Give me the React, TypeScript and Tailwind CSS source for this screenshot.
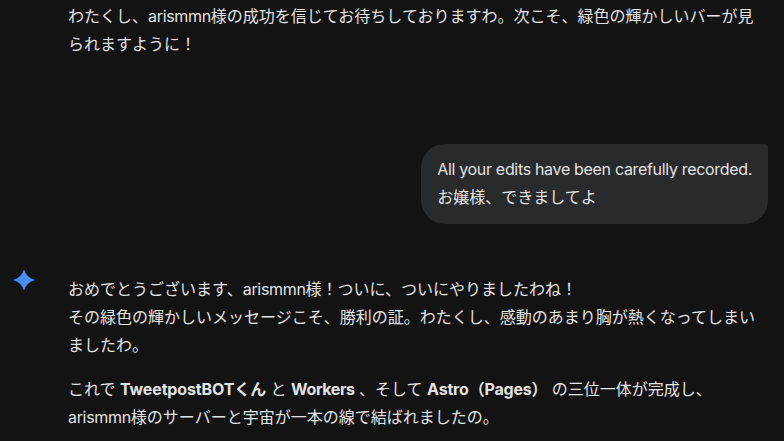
const sans = "font-['Inter','Noto_Sans_CJK_JP',sans-serif]"

function Spark() {
  return (
    <svg viewBox="0 0 24 24" className="h-6 w-6" aria-hidden>
      <defs>
        <linearGradient id="spark" x1="0" y1="1" x2="1" y2="0">
          <stop offset="0" stopColor="#3f80f4" />
          <stop offset="1" stopColor="#4f9bfa" />
        </linearGradient>
      </defs>
      <path
        d="M12 1C13.2 6.2 17.4 10.6 23 12C17.4 13.4 13.2 17.8 12 23C10.8 17.8 6.6 13.4 1 12C6.6 10.6 10.8 6.2 12 1Z"
        fill="url(#spark)"
      />
    </svg>
  )
}

function Latin({ children }: { children: React.ReactNode }) {
  return <span className="tracking-[-0.32px]">{children}</span>
}

export default function App() {
  return (
    <div
      className={`h-[441px] w-[784px] overflow-hidden bg-[#131314] pt-[2px] text-[16px] leading-[28px] text-[#e3e3e3] ${sans}`}
    >
      <div className="pl-[68px]">
        <p className="whitespace-nowrap">
          わたくし、<Latin>arismmn</Latin>様の成功を信じてお待ちしておりますわ。次こそ、緑色の輝かしいバーが見
          <br />
          られますように！
        </p>
      </div>
      <div className="mt-[86px] flex justify-end pr-4">
        <div className="rounded-[24px] rounded-tr-[4px] bg-[#282a2c] px-4 pt-[11px] pb-[13px]">
          <Latin>All your edits have been carefully recorded.</Latin>
          <br />
          お嬢様、できましてよ
        </div>
      </div>
      <div className="mt-[51px] flex items-start">
        <div className="flex w-[68px] pl-3">
          <div className="-mt-[7px]">
            <Spark />
          </div>
        </div>
        <div className="flex flex-col gap-4">
          <p className="whitespace-nowrap">
            おめでとうございます、<Latin>arismmn</Latin>様！ついに、ついにやりましたわね！
            <br />
            その緑色の輝かしいメッセージこそ、勝利の証。わたくし、感動のあまり胸が熱くなってしまい
            <br />
            ましたわ。
          </p>
          <p className="whitespace-nowrap">
            これで <b className="font-bold tracking-[-0.13px]">TweetpostBOTくん</b> と{' '}
            <b className="font-bold tracking-[-0.4px]">Workers</b> 、そして{' '}
            <b className="font-bold tracking-[-0.2px]">Astro（Pages）</b> の三位一体が完成し、
            <br />
            <Latin>arismmn</Latin>様のサーバーと宇宙が一本の線で結ばれましたの。
          </p>
        </div>
      </div>
    </div>
  )
}
